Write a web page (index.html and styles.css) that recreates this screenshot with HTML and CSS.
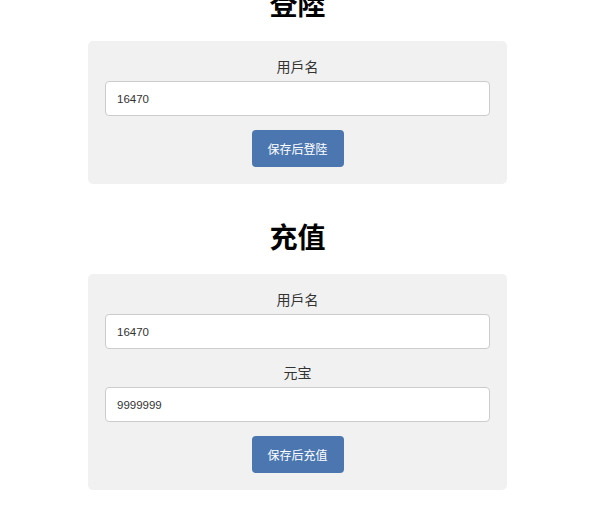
FILE: index.html
```html
<!DOCTYPE html>
<html lang="zh">

<head>
    <meta charset="UTF-8">
    <meta name="viewport" content="width=device-width, initial-scale=1.0">
    <title>登陸 / 充值</title>
    <link rel="stylesheet" href="styles.css">
</head>

<body>
    <section class="block">
        <h2>登陸</h2>
        <form class="panel" id="loginForm">
            <div class="form-group">
                <label for="loginUser">用戶名</label>
                <input type="text" id="loginUser" name="user" value="16470">
            </div>
            <button type="submit">保存后登陸</button>
        </form>
    </section>

    <section class="block">
        <h2>充值</h2>
        <form class="panel" id="payForm">
            <div class="form-group">
                <label for="payUser">用戶名</label>
                <input type="text" id="payUser" name="user" value="16470">
            </div>
            <div class="form-group">
                <label for="amount">元宝</label>
                <input type="text" id="amount" name="amount" value="9999999">
            </div>
            <button type="submit">保存后充值</button>
        </form>
    </section>
</body>

</html>
```

FILE: styles.css
```css
body {
    font-family: "Liberation Sans", "Noto Sans CJK SC", sans-serif;
    margin: -11px 2px 0 0;
    color: #333;
}

.block {
    width: 419px;
    margin: 0 auto;
}

.block + .block {
    margin-top: 38px;
}

h2 {
    font-size: 28px;
    line-height: 34px;
    font-weight: bold;
    color: #000;
    text-align: center;
    margin: 0 0 18px;
}

.panel {
    background: #f1f1f1;
    border-radius: 5px;
    padding: 16px 17px 17px;
    display: flex;
    flex-direction: column;
    align-items: center;
}

.form-group {
    width: 100%;
    margin-bottom: 14px;
}

label {
    display: block;
    text-align: center;
    font-size: 14px;
    line-height: 20px;
    margin-bottom: 4px;
}

input {
    width: 100%;
    height: 35px;
    padding: 0 11px;
    box-sizing: border-box;
    border: 1px solid #ccc;
    border-radius: 4px;
    background: #fff;
    font-family: inherit;
    font-size: 11.5px;
    color: #333;
}

button {
    width: 92px;
    height: 37px;
    background: #4b76b0;
    color: #fff;
    border: none;
    border-radius: 4px;
    font-family: inherit;
    font-size: 12px;
    cursor: pointer;
}

button:hover {
    background: #3f6699;
}
```
